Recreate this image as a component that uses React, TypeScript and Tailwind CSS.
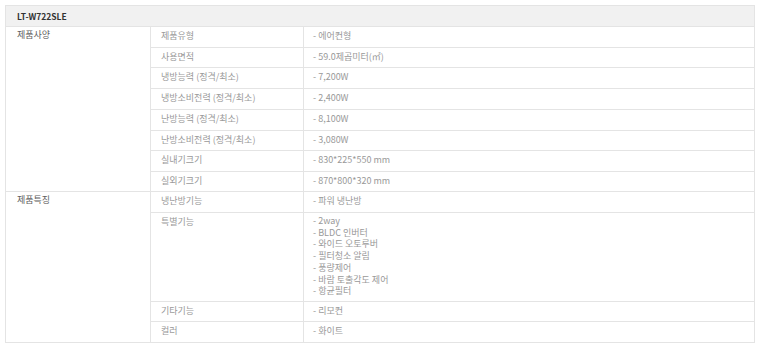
import React from "react";

type Row = { label: string; values: string[]; h: string };

const sections: { title: string; rows: Row[] }[] = [
  {
    title: "제품사양",
    rows: [
      { label: "제품유형", values: ["- 에어컨형"], h: "h-[21px]" },
      { label: "사용면적", values: ["- 59.0제곱미터(㎡)"], h: "h-[20px]" },
      { label: "냉방능력 (정격/최소)", values: ["- 7,200W"], h: "h-[21px]" },
      { label: "냉방소비전력 (정격/최소)", values: ["- 2,400W"], h: "h-[21px]" },
      { label: "난방능력 (정격/최소)", values: ["- 8,100W"], h: "h-[21px]" },
      { label: "난방소비전력 (정격/최소)", values: ["- 3,080W"], h: "h-[20px]" },
      { label: "실내기크기", values: ["- 830*225*550 mm"], h: "h-[21px]" },
      { label: "실외기크기", values: ["- 870*800*320 mm"], h: "h-[19px]" },
    ],
  },
  {
    title: "제품특징",
    rows: [
      { label: "냉난방기능", values: ["- 파워 냉난방"], h: "h-[21px]" },
      {
        label: "특별기능",
        values: [
          "- 2way",
          "- BLDC 인버터",
          "- 와이드 오토루버",
          "- 필터청소 알림",
          "- 풍량제어",
          "- 바람 토출각도 제어",
          "- 항균필터",
        ],
        h: "h-[89px]",
      },
      { label: "기타기능", values: ["- 리모컨"], h: "h-[20px]" },
      { label: "컬러", values: ["- 화이트"], h: "h-[20px]" },
    ],
  },
];

export default function App() {
  return (
    <div
      className="bg-white w-[760px] h-[347px] pt-[5px] pl-[5px]"
      style={{ fontFamily: '"Noto Sans CJK KR", "Noto Sans", sans-serif' }}
    >
      <div className="w-[750px] border border-[#e4e4e4] text-[9px]">
        <div className="h-[21px] bg-[#f1f1f1] border-b border-[#e4e4e4] pl-[11px] flex items-center font-bold text-[8.5px] text-[#333] leading-none">
          LT-W722SLE
        </div>
        {sections.map((s, si) => (
          <div
            key={s.title}
            className={
              si < sections.length - 1
                ? "flex border-b border-[#e4e4e4]"
                : "flex"
            }
          >
            <div className="w-[144px] shrink-0 pl-[11px] pt-[1px] leading-[14px] text-[9px] text-[#5e5e5e]">
              {s.title}
            </div>
            <div className="flex-1 flex flex-col">
              {s.rows.map((r, ri) => {
                const multi = r.values.length > 1;
                return (
                  <div
                    key={r.label}
                    className={
                      (ri < s.rows.length - 1 ? "border-b border-[#e4e4e4] " : "") +
                      r.h +
                      " flex box-border"
                    }
                  >
                    <div className="w-[153px] shrink-0 border-l border-[#e4e4e4] pl-[10px] text-[#999] pt-[2px] leading-[14px]">
                      {r.label}
                    </div>
                    <div
                      className={
                        multi
                          ? "flex-1 border-l border-[#e4e4e4] pl-[9px] text-[#999] pt-[2px] leading-[11.7px] flex flex-col"
                          : "flex-1 border-l border-[#e4e4e4] pl-[9px] text-[#999] pt-[2px] leading-[14px] flex flex-col"
                      }
                    >
                      {r.values.map((v) => (
                        <span key={v}>{v}</span>
                      ))}
                    </div>
                  </div>
                );
              })}
            </div>
          </div>
        ))}
      </div>
    </div>
  );
}
